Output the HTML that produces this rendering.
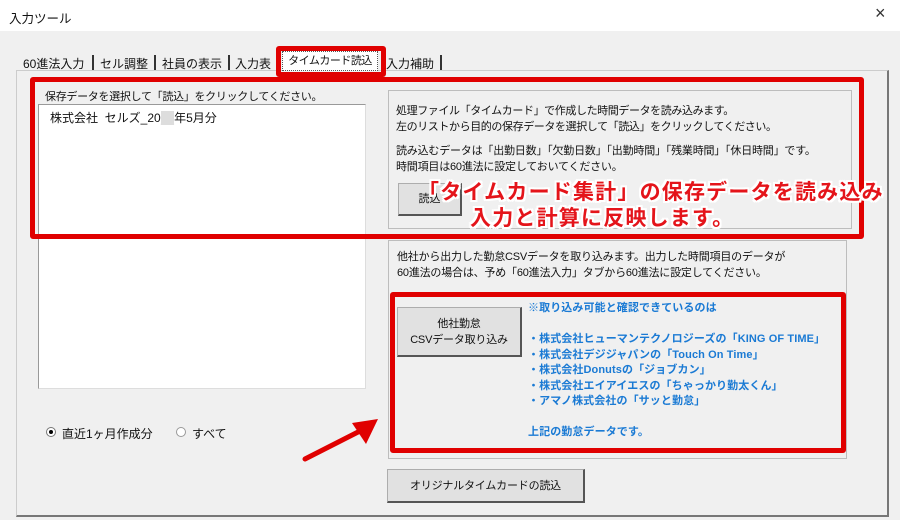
<!DOCTYPE html>
<html><head><meta charset="utf-8"><style>
*{margin:0;padding:0;box-sizing:border-box}
body{width:900px;height:520px;background:#f0f0f0;font-family:"Liberation Sans","Noto Sans CJK JP",sans-serif;font-size:11px;color:#111;position:relative;overflow:hidden}
.a{position:absolute;white-space:nowrap}
.title{left:0;top:0;width:900px;height:31px;background:#fff}
.btn{background:#e1e1e1;border:1px solid #adadad;border-right:2px solid #555;border-bottom:2px solid #555;text-align:center;font-size:11px}
.frame{border:1px solid #bdbdbd;background:#f0f0f0}
.red{border:5px solid #e00000;border-radius:3px}
.blue{color:#1a7ad4;font-weight:bold;font-size:11px;line-height:15.5px;letter-spacing:0.1px}
.ann{color:#e4141a;font-size:21px;font-weight:bold;letter-spacing:1.2px;text-shadow:-2px -2px 0 #fff,2px -2px 0 #fff,-2px 2px 0 #fff,2px 2px 0 #fff,0 2px 0 #fff,0 -2px 0 #fff,2px 0 0 #fff,-2px 0 0 #fff;white-space:nowrap}
.tab{top:55px;font-size:12px}
.sep{top:55px;width:2px;height:15px;background:#333}
</style></head><body>
<div class="a title"></div>
<div class="a" style="left:9px;top:8px;font-size:12.5px">入力ツール</div>
<div class="a" style="left:875px;top:3px;font-size:18px;color:#333">×</div>

<div class="a" style="left:16px;top:70px;width:873px;height:447px;border:1px solid #ccc;border-right:2px solid #777;border-bottom:2px solid #777"></div>
<div class="a tab" style="left:23px">60進法入力</div><div class="a sep" style="left:92px"></div>
<div class="a tab" style="left:100px">セル調整</div><div class="a sep" style="left:154px"></div>
<div class="a tab" style="left:162px">社員の表示</div><div class="a sep" style="left:228px"></div>
<div class="a tab" style="left:235px">入力表</div>
<div class="a" style="left:282px;top:51px;width:96px;height:20px;background:#fff;border:1px dotted #555;font-size:11px;text-align:center;line-height:18px;letter-spacing:-0.5px">タイムカード読込</div>
<div class="a tab" style="left:386px">入力補助</div><div class="a sep" style="left:440px"></div>
<div class="a red" style="left:276px;top:46px;width:110px;height:31px"></div>

<div class="a" style="left:45px;top:88px;letter-spacing:-0.3px">保存データを選択して「読込」をクリックしてください。</div>
<div class="a" style="left:38px;top:104px;width:328px;height:285px;background:#fff;border:1px solid #999;border-right:1px solid #ddd;border-bottom:1px solid #ddd"></div>
<div class="a" style="left:50px;top:109px;font-size:12px">株式会社&nbsp; セルズ_20<span style="background:#ddd;color:#ddd">__</span>年5月分</div>

<div class="a frame" style="left:388px;top:90px;width:464px;height:139px"></div>
<div class="a" style="left:396px;top:103px;line-height:16px;letter-spacing:-0.4px">処理ファイル「タイムカード」で作成した時間データを読み込みます。<br>左のリストから目的の保存データを選択して「読込」をクリックしてください。</div>
<div class="a" style="left:396px;top:143px;line-height:16px;letter-spacing:-0.2px">読み込むデータは「出勤日数」「欠勤日数」「出勤時間」「残業時間」「休日時間」です。<br>時間項目は60進法に設定しておいてください。</div>
<div class="a btn" style="left:398px;top:183px;width:64px;height:33px;line-height:31px">読込</div>
<div class="a red" style="left:30px;top:77px;width:834px;height:162px"></div>
<div class="a ann" style="left:418px;top:176px">「タイムカード集計」の保存データを読み込み</div>
<div class="a ann" style="left:470px;top:202px">入力と計算に反映します。</div>

<div class="a frame" style="left:388px;top:240px;width:459px;height:219px"></div>
<div class="a" style="left:397px;top:249px;line-height:16px;letter-spacing:-0.2px">他社から出力した勤怠CSVデータを取り込みます。出力した時間項目のデータが<br>60進法の場合は、予め「60進法入力」タブから60進法に設定してください。</div>
<div class="a red" style="left:390px;top:292px;width:456px;height:161px"></div>
<div class="a btn" style="left:397px;top:307px;width:125px;height:50px;line-height:16px;padding-top:8px;letter-spacing:-0.2px">他社勤怠<br>CSVデータ取り込み</div>
<div class="a blue" style="left:528px;top:301px">※取り込み可能と確認できているのは<br><br>・株式会社ヒューマンテクノロジーズの「KING OF TIME」<br>・株式会社デジジャパンの「Touch On Time」<br>・株式会社Donutsの「ジョブカン」<br>・株式会社エイアイエスの「ちゃっかり勤太くん」<br>・アマノ株式会社の「サッと勤怠」<br><br>上記の勤怠データです。</div>

<div class="a btn" style="left:387px;top:469px;width:198px;height:34px;line-height:32px;letter-spacing:-0.2px">オリジナルタイムカードの読込</div>

<div class="a" style="left:46px;top:427px;width:10px;height:10px;border-radius:50%;border:1px solid #777;background:#fff"></div>
<div class="a" style="left:49px;top:430px;width:4px;height:4px;border-radius:50%;background:#000"></div>
<div class="a" style="left:62px;top:425px;font-size:12px">直近1ヶ月作成分</div>
<div class="a" style="left:176px;top:427px;width:10px;height:10px;border-radius:50%;border:1px solid #999;background:#fff"></div>
<div class="a" style="left:192px;top:425px;font-size:12px">すべて</div>

<svg class="a" style="left:300px;top:410px" width="90" height="55"><path d="M5 49 L62 20" stroke="#e00000" stroke-width="5" stroke-linecap="round"/><path d="M78 9 L52 13 L66 34 Z" fill="#e00000"/></svg>
</body></html>
